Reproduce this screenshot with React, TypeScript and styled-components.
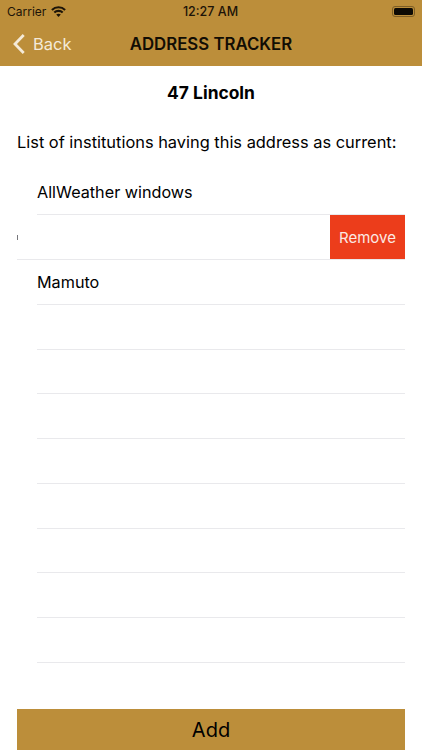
import * as React from "react";
import styled, { createGlobalStyle } from "styled-components";

const GOLD = "#bc8e3a";

const Global = createGlobalStyle`
    html, body {
        margin: 0;
        padding: 0;
        background: #fff;
        font-family: Inter, "Liberation Sans", sans-serif;
    }
`;

const Screen = styled.div`
    width: 422px;
    height: 750px;
    display: flex;
    flex-direction: column;
    overflow: hidden;
    color: #000;
`;

const Header = styled.header`
    height: 66px;
    flex: none;
    background: ${GOLD};
`;

const StatusBar = styled.div`
    height: 22px;
    display: grid;
    grid-template-columns: 1fr auto 1fr;
    align-items: center;
    padding: 0 6px 0 7px;
    font-size: 12px;
    color: #1c1408;
`;

const StatusLeft = styled.div`
    display: flex;
    align-items: center;
    gap: 5px;
`;

const Clock = styled.div`
    font-weight: 500;
    font-size: 12.5px;
    padding-right: 2px;
`;

const Battery = styled.div`
    justify-self: end;
    width: 23px;
    height: 11px;
    box-sizing: border-box;
    border: 1px solid #7d5e26;
    border-radius: 3px;
    padding: 1px;
    margin-right: 1px;
    &::before {
        content: "";
        display: block;
        height: 100%;
        background: #0d0a04;
        border-radius: 1.5px;
    }
`;

const NavBar = styled.div`
    height: 44px;
    display: grid;
    grid-template-columns: 1fr auto 1fr;
    align-items: center;
    padding-bottom: 1px;
    box-sizing: border-box;
`;

const Back = styled.div`
    display: flex;
    align-items: center;
    gap: 8px;
    padding-left: 13px;
    color: #f4ead8;
    font-size: 16.5px;
`;

const NavTitle = styled.div`
    font-size: 16.8px;
    font-weight: 600;
    color: #120d04;
`;

const Title = styled.h1`
    margin: 17px 0 0;
    height: 20px;
    line-height: 20px;
    text-align: center;
    font-size: 17.4px;
    font-weight: 700;
`;

const Label = styled.p`
    margin: 29px 0 0 17px;
    height: 20px;
    line-height: 20px;
    font-size: 16.4px;
`;

const List = styled.ul`
    list-style: none;
    margin: 18.6px 17px 0;
    padding: 0;
    flex: 1;
`;

const Row = styled.li<{ $swiped?: boolean }>`
    position: relative;
    height: 44.75px;
    box-sizing: border-box;
    margin-left: ${(p) => (p.$swiped ? "0" : "20px")};
    border-bottom: 1px solid #e9e9ec;
    display: flex;
    align-items: center;
    justify-content: ${(p) => (p.$swiped ? "space-between" : "flex-start")};
    font-size: 16.2px;
`;

const Cut = styled.span`
    width: 1.5px;
    height: 5px;
    margin-left: -0.5px;
    background: #77777c;
`;

const RemoveButton = styled.button`
    align-self: stretch;
    width: 75px;
    border: 0;
    padding: 0;
    background: #ec3d1b;
    color: #fbe9e3;
    font: inherit;
    font-size: 15px;
`;

const AddButton = styled.button`
    flex: none;
    height: 41px;
    margin: 0 17px;
    border: 0;
    padding: 0;
    background: ${GOLD};
    color: #000;
    font: inherit;
    font-size: 20px;
`;

const institutions = ["AllWeather windows", "", "Mamuto", "", "", "", "", "", "", "", ""];

export default function App() {
    return (
        <Screen>
            <Global />
            <Header>
                <StatusBar>
                    <StatusLeft>
                        Carrier
                        <svg width="15" height="11" viewBox="0 0 15 11" fill="none" stroke="#1c1408" strokeWidth="2.1">
                            <path d="M0.9 3.9C4.5 0.4 10.5 0.4 14.1 3.9" />
                            <path d="M3.3 6.5C5.6 4.3 9.4 4.3 11.7 6.5" />
                            <path d="M7.5 11L5.2 8.6C6.5 7.4 8.5 7.4 9.8 8.6Z" fill="#1c1408" stroke="none" />
                        </svg>
                    </StatusLeft>
                    <Clock>12:27 AM</Clock>
                    <Battery />
                </StatusBar>
                <NavBar>
                    <Back>
                        <svg width="12" height="20" viewBox="0 0 12 20" fill="none" stroke="#f4ead8" strokeWidth="2.8">
                            <path d="M10.7 1L2 10L10.7 19" />
                        </svg>
                        Back
                    </Back>
                    <NavTitle>ADDRESS TRACKER</NavTitle>
                </NavBar>
            </Header>
            <Title>47 Lincoln</Title>
            <Label>List of institutions having this address as current:</Label>
            <List>
                {institutions.map((name, i) =>
                    i === 1 ? (
                        <Row key={i} $swiped>
                            <Cut />
                            <RemoveButton>Remove</RemoveButton>
                        </Row>
                    ) : (
                        <Row key={i}>{name}</Row>
                    )
                )}
            </List>
            <AddButton>Add</AddButton>
        </Screen>
    );
}
